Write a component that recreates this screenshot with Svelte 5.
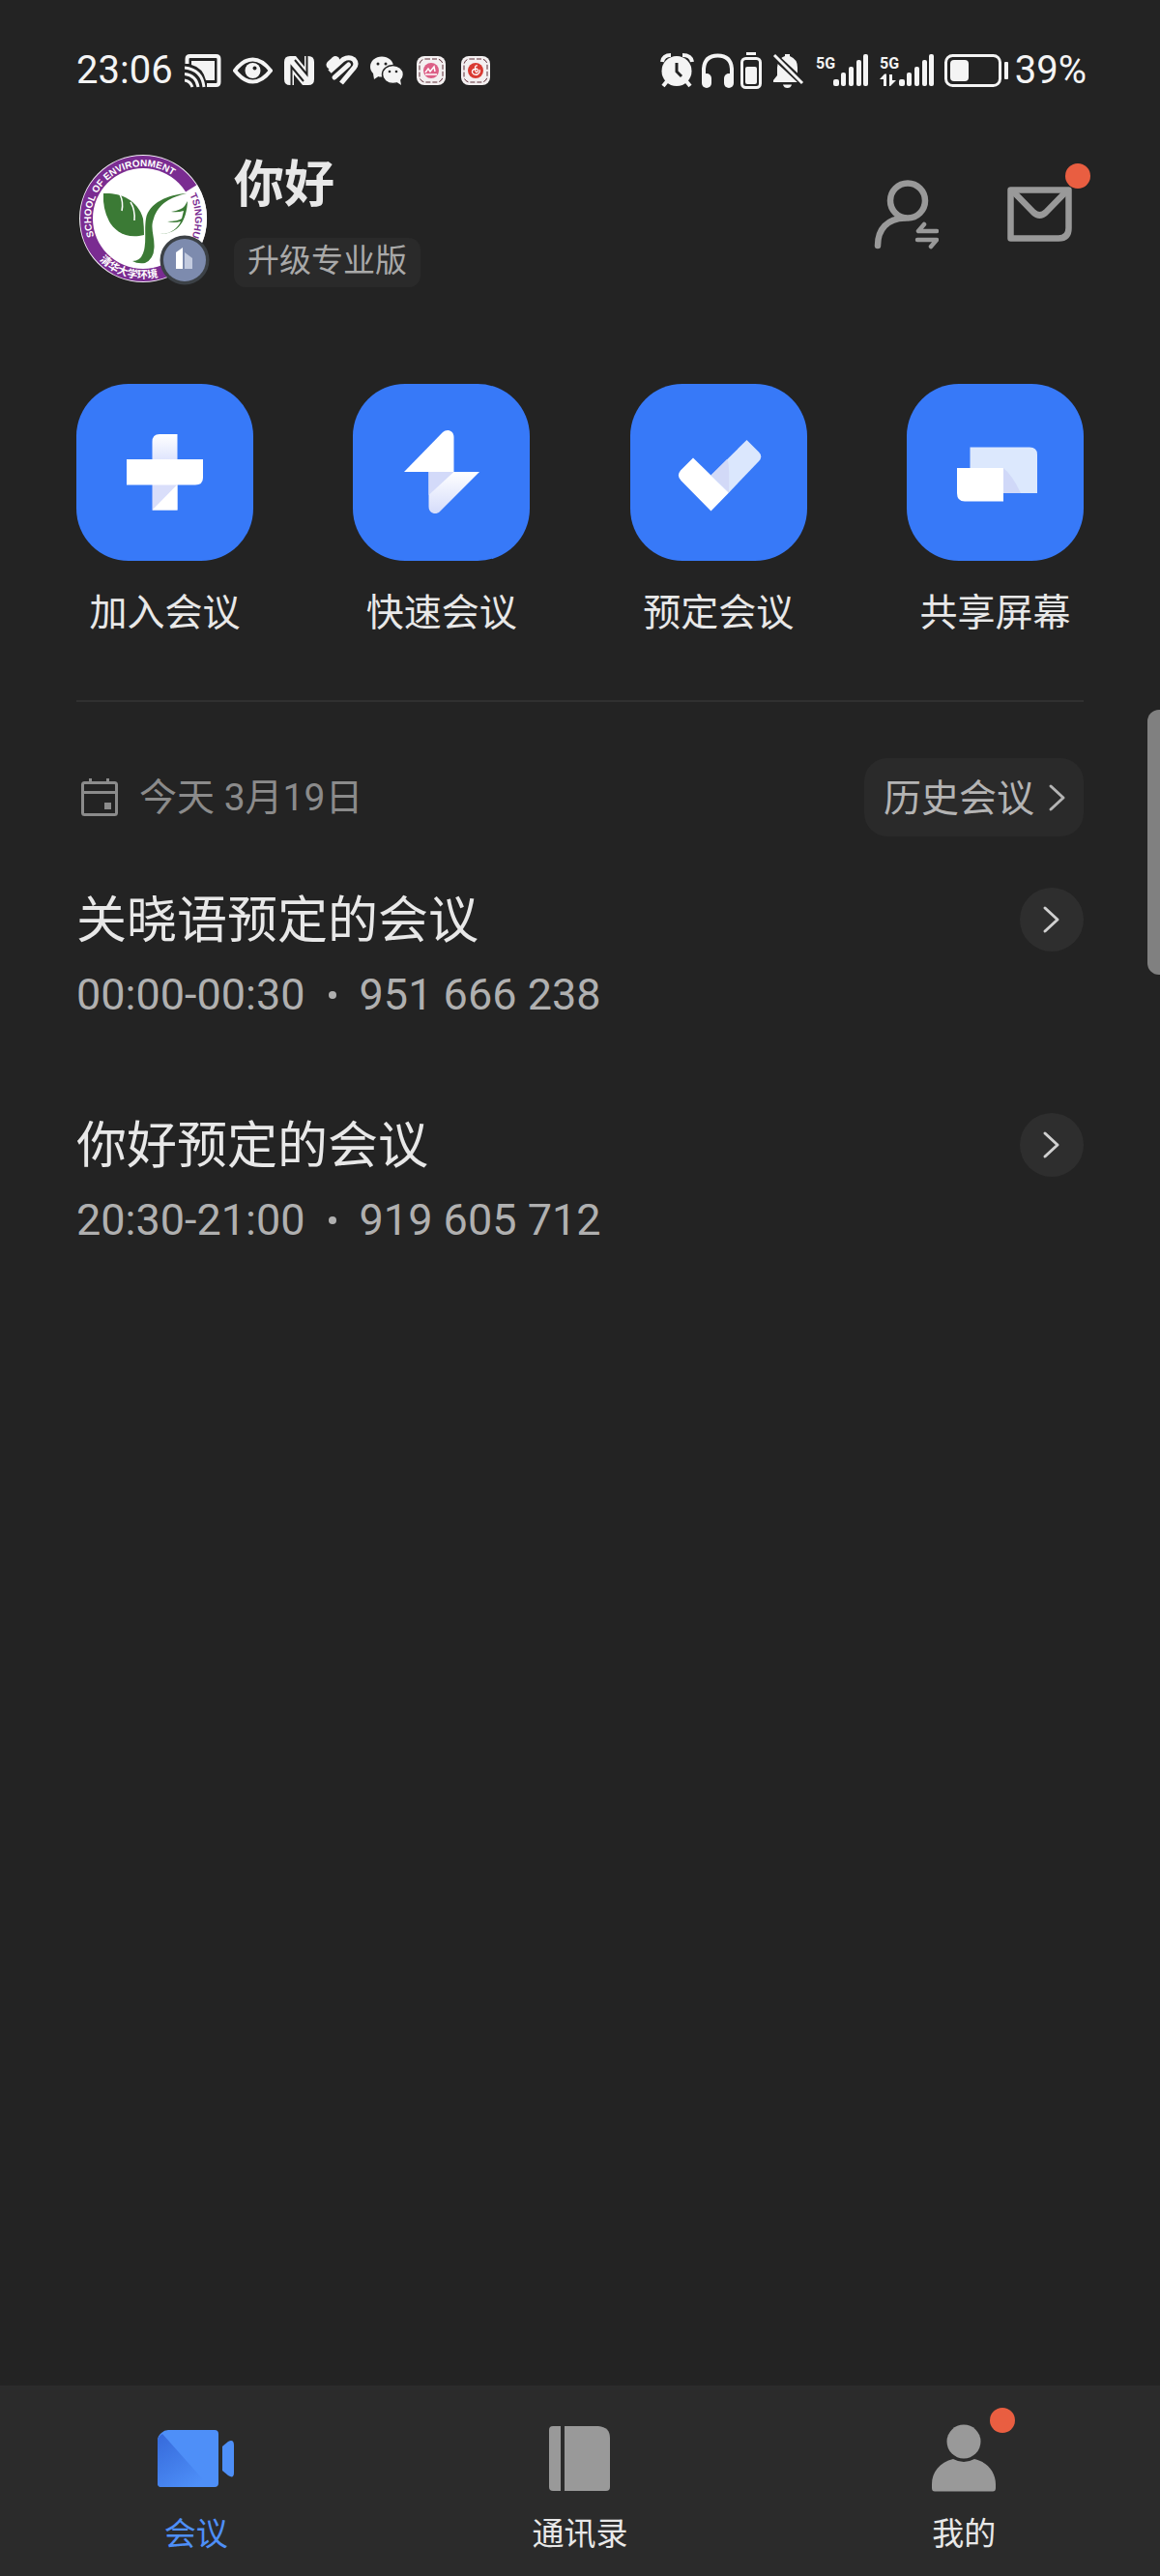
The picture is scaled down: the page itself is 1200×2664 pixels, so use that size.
<script>
  const actions = [
    { id: 'join', label: '加入会议' },
    { id: 'quick', label: '快速会议' },
    { id: 'book', label: '预定会议' },
    { id: 'share', label: '共享屏幕' }
  ];
  const meetings = [
    { title: '关晓语预定的会议', time: '00:00-00:30', code: '951 666 238' },
    { title: '你好预定的会议', time: '20:30-21:00', code: '919 605 712' }
  ];
  const tabs = [
    { id: 'meeting', label: '会议', active: true },
    { id: 'contacts', label: '通讯录' },
    { id: 'mine', label: '我的', dot: true }
  ];
</script>

{#snippet signal(data)}
  <svg class="light" width={data ? 64 : 60} height="38" viewBox="0 0 {data ? 64 : 60} 38" aria-hidden="true">
    <text class="net" x="4" y="17">5G</text>
    <g transform="translate({data ? 2 : 0} 0)">
      <rect x="22" y="28" width="6" height="7" rx="2" />
      <rect x="30" y="21" width="5" height="14" rx="2" />
      <rect x="38" y="15" width="5" height="20" rx="2" />
      <rect x="46" y="8" width="5" height="27" rx="2" />
      <rect x="53" y="2" width="5" height="33" rx="2" />
    </g>
    {#if data}
      <path d="M4 28 L9 22.500 H11 V35 H8 V28 Z M14 23 H17 V29 H21 L15 35 H14 Z" />
    {/if}
  </svg>
{/snippet}

{#snippet chevron()}
  <svg width="20" height="32" viewBox="0 0 20 32" fill="none" stroke="currentColor" stroke-width="3" stroke-linecap="round" stroke-linejoin="round" aria-hidden="true">
    <path d="M3 4 L16 16 L3 28" />
  </svg>
{/snippet}

<div class="screen">
  <div class="status">
    <div class="status-left">
      <span class="clock">23:06</span>
      <svg class="light" width="38" height="36" viewBox="0 0 38 36" aria-hidden="true">
        <path d="M2.500 11 V6 Q2.500 3 5.500 3 H32.500 Q35.500 3 35.500 6 V30 Q35.500 33 32.500 33 H23" fill="none" stroke="#f4f4f4" stroke-width="4" />
        <path d="M7 8 H31 V28 H22 Q19 15 7 12 Z" />
        <path d="M0 15 Q18 17 20 35 M0 21.500 Q12 23 14 35 M0 28 Q6 29 8 35" fill="none" stroke="#f4f4f4" stroke-width="3" />
      </svg>
      <svg class="light" width="41" height="28" viewBox="0 0 41 28" aria-hidden="true">
        <path d="M2 14 Q11 2.500 20.500 2.500 T39 14 Q30 25.500 20.500 25.500 T2 14 Z" fill="none" stroke="#f4f4f4" stroke-width="4" stroke-linejoin="round" />
        <circle cx="20.500" cy="14" r="8" />
        <circle cx="22.500" cy="11.500" r="2" fill="#232323" />
      </svg>
      <svg class="light" width="31" height="32" viewBox="0 0 31 32" aria-hidden="true">
        <path d="M6 1 H12 L21 12 V1 H25 Q31 1 31 7 V25 Q31 31 25 31 H19 L10 20 V31 H6 Q0 31 0 25 V7 Q0 1 6 1 Z" />
        <path d="M7.500 31 V12 L20 27 M23.500 1 V20 L11 5" fill="none" stroke="#232323" stroke-width="2" />
      </svg>
      <svg width="34" height="32" viewBox="0 0 34 32" fill="none" stroke="#f4f4f4" aria-hidden="true">
        <path d="M5 10 L10 5.500" stroke-width="9" stroke-linecap="round" />
        <path d="M4 17 L18 4.500 Q24 1 29 4.500 Q33 9 29 13.500 L16 29" stroke-width="5" />
        <path d="M9 23 L23.500 10" stroke-width="5" stroke-linecap="round" />
      </svg>
      <svg class="light" width="34" height="30" viewBox="0 0 34 30" aria-hidden="true">
        <ellipse cx="12" cy="11" rx="12" ry="10.500" />
        <path d="M3 18 L4 24 L10 20 Z" />
        <ellipse cx="23.500" cy="19" rx="11" ry="9.500" stroke="#232323" stroke-width="1.500" />
        <path d="M26 26 L32 30 L31 24 Z" />
        <g fill="#232323">
          <circle cx="8" cy="8" r="1.500" /><circle cx="16" cy="8" r="1.500" />
          <circle cx="20" cy="16" r="1.300" /><circle cx="27" cy="16" r="1.300" />
        </g>
      </svg>
      <svg width="34" height="30" viewBox="0 0 34 30" aria-hidden="true">
        <rect x="2" y="0" width="30" height="30" rx="8" fill="#f4f0f1" />
        <rect x="5" y="3" width="24" height="24" rx="6" fill="none" stroke="#5c2a35" stroke-dasharray="5 2" />
        <circle cx="17" cy="15" r="8" fill="#dc5f86" />
        <path d="M11 17 L14 13 L16 16 L20 11 L21 16 M11 19 H23" fill="none" stroke="#fff" stroke-width="1.500" />
      </svg>
      <svg width="34" height="30" viewBox="0 0 34 30" aria-hidden="true">
        <rect x="2" y="0" width="30" height="30" rx="8" fill="#f4f0f1" />
        <rect x="5" y="3" width="24" height="24" rx="6" fill="none" stroke="#5c2a35" stroke-dasharray="5 2" />
        <circle cx="17" cy="15" r="8" fill="#d93a32" />
        <path d="M19 10 Q16 9 16.500 14 Q17 18 19 16 Q20 13 17 13 Q13 14 13.500 17 Q15 20 19 19 Q22 17 21 14" fill="none" stroke="#fff" stroke-width="1.300" />
      </svg>
    </div>
    <div class="status-right">
      <svg class="light" width="36" height="36" viewBox="0 0 36 36" aria-hidden="true">
        <circle cx="17" cy="18.500" r="15.500" />
        <path d="M2 9 Q3 2 11 2 M23 2 Q32 2 33 9" fill="none" stroke="#f4f4f4" stroke-width="4" />
        <path d="M7 29 L3 34 M27 29 L31 34" stroke="#f4f4f4" stroke-width="4" />
        <path d="M17 10 V19 L22 24" fill="none" stroke="#232323" stroke-width="3" />
      </svg>
      <svg class="light" width="35" height="38" viewBox="0 0 35 38" aria-hidden="true">
        <path d="M3 27 V17 Q4 3.500 17.500 3.500 T32 17 V27" fill="none" stroke="#f4f4f4" stroke-width="4" />
        <rect x="1" y="22" width="10" height="15" rx="5" />
        <rect x="24" y="22" width="10" height="15" rx="5" />
      </svg>
      <svg class="light" width="24" height="40" viewBox="0 0 24 40" aria-hidden="true">
        <rect x="6" y="1" width="10" height="3" />
        <rect x="1.500" y="7.500" width="19" height="30" rx="4" fill="none" stroke="#f4f4f4" stroke-width="3" />
        <rect x="5" y="16" width="12" height="18" rx="2" />
      </svg>
      <svg class="light" width="38" height="38" viewBox="0 0 38 38" aria-hidden="true">
        <path d="M16 4 V2 H21 V4 Q29 7 29 16 V24 L33 31 H4 V29 L8 24 V16 Q9 6 16 4 Z" />
        <path d="M14 33.500 H23 Q22 37 18.500 37 T14 33.500 Z" />
        <path d="M3 2 L36 33" stroke="#232323" stroke-width="7" />
        <path d="M5 3 L34 32" stroke="#f4f4f4" stroke-width="3" />
      </svg>
      {@render signal(false)}
      {@render signal(true)}
      <svg class="light" width="68" height="36" viewBox="0 0 68 36" aria-hidden="true">
        <rect x="2.500" y="2.500" width="56" height="31" rx="7" fill="none" stroke="#f4f4f4" stroke-width="3" />
        <rect x="7" y="7" width="19" height="22" rx="4" />
        <rect x="63" y="9" width="4" height="18" rx="1" />
      </svg>
      <span class="clock">39%</span>
    </div>
  </div>

  <main>
    <header>
      <svg class="avatar" width="136" height="136" viewBox="0 0 136 136" role="img" aria-label="头像">
        <defs>
          <path id="ring-top" d="M15.300 84.500 A54 54 0 0 1 107.400 31.300" />
          <path id="ring-right" d="M114.100 41.500 A54 54 0 0 1 107.400 100.700" />
          <path id="ring-bottom" d="M21 109 A62.500 62.500 0 0 0 112 108" />
        </defs>
        <circle cx="66" cy="66" r="66" fill="#f3eef5" />
        <circle cx="66" cy="66" r="58" fill="none" stroke="#7a2c91" stroke-width="14" />
        <path d="M66 66 L122 31 A66 66 0 0 1 122 101 Z" fill="#fff" />
        <circle cx="66" cy="66" r="52" fill="#fff" />
        <text class="ring-en" fill="#fff"><textPath href="#ring-top">SCHOOL OF ENVIRONMENT</textPath></text>
        <text class="ring-en" fill="#7a2c91"><textPath href="#ring-right">TSINGHU</textPath></text>
        <text class="ring-cn" fill="#fff"><textPath href="#ring-bottom">清华大学环境</textPath></text>
        <g fill="#3b7a35">
          <path d="M25 40 C40 39 60 45 66 66 Q67 75 67 83 C48 88 36 78 31 69 Q24 56 25 40 Z" />
          <path d="M111 40 C92 41 72 50 69 66 C67 78 70 92 66 102 Q63 110 55 110 Q60 113 68 112 Q77 108 77.500 96 C78 84 73 76 77 66 C82 50 95 44 111 40 Z" />
          <path d="M112 48 C111 68 103 83 81 82 C94 83 102 76 105 69 Q98 71 91 69 Q102 69 106 66 L108 58 Q102 60 95 59 Q106 57 109 53 Z" />
        </g>
        <path d="M42 41 Q46 49 44 58 M53 49 Q58 57 57 68" fill="none" stroke="#fff" stroke-width="1.500" />
        <circle cx="109" cy="109" r="25.500" fill="#3c4146" />
        <circle cx="109" cy="109" r="22" fill="#7d8bae" />
        <path d="M100 101 L107 96 V118 H100 Z" fill="#fff" />
        <path d="M109 101 L117 107 V118 H109 Z" fill="#c3cbdf" />
      </svg>
      <div class="who">
        <h1>你好</h1>
        <button class="upgrade">升级专业版</button>
      </div>
      <div class="tools">
        <button class="tool" aria-label="切换账号">
          <svg width="67" height="72" viewBox="0 0 67 72" fill="none" stroke="#999" stroke-linecap="round" stroke-linejoin="round" aria-hidden="true">
            <circle cx="35" cy="21.500" r="18" stroke-width="6.500" />
            <path d="M4 68 C4 51 14 40 32 39.500" stroke-width="6.500" />
            <path d="M52 46 L46 53 H65 M45 62 H65 L59 69" stroke-width="4.500" />
          </svg>
        </button>
        <button class="tool" aria-label="消息">
          <svg width="67" height="58" viewBox="0 0 67 58" fill="none" stroke="#999" stroke-width="6.500" stroke-linejoin="round" aria-hidden="true">
            <path d="M3.500 3.500 H63.500 V43 Q63.500 53.500 53 53.500 H3.500 Z" />
            <path d="M6 5 L27 26.500 Q33.500 32.500 40 26.500 L61 5" />
          </svg>
          <span class="dot"></span>
        </button>
      </div>
    </header>

    <ul class="actions">
      {#each actions as a (a.id)}
        <li>
          <button class="action">
            <svg class="tile" viewBox="0 0 183 183" aria-hidden="true">
              {#if a.id === 'join'}
                <defs><linearGradient id="g1" x2="0" y2="1"><stop offset="0" stop-color="#fff" /><stop offset="1" stop-color="#dfe5fd" /></linearGradient></defs>
                <path d="M78.500 78.500 V60 Q78.500 52 86 52 H104.500 V78.500 Z" fill="url(#g1)" />
                <rect x="78.500" y="104" width="26" height="26.500" fill="#d9defa" />
                <path d="M78.500 130.500 L104.500 104 V130.500 Z" fill="#fff" />
                <path d="M52 78 H131 V97 Q131 104.500 123 104.500 H52 Z" fill="#fff" />
              {:else if a.id === 'quick'}
                <defs><linearGradient id="g2" x2="0" y2="1"><stop offset="0" stop-color="#fff" /><stop offset="1" stop-color="#d5dcfa" /></linearGradient></defs>
                <path d="M78.500 91 H131 L90 132 C86 136 78.500 134 78.500 127 Z" fill="url(#g2)" />
                <path d="M78.500 91 H104.500 L78.500 115 Z" fill="#d3daf9" />
                <path d="M53 91 L93 50 C97 46 104.500 48 104.500 55 V91 Z" fill="#fff" />
              {:else if a.id === 'book'}
                <path d="M83.500 94.500 L120.500 58 L133 70.500 Q137.500 75 133 80 L102 112.500 Z" fill="#dbe7fd" />
                <path d="M83.500 94.500 L100 78 Q103 80 102 112.500 Z" fill="#d2d9f7" />
                <path d="M65 76.500 L102 112.500 L83.500 131.500 L52.500 100 Q47.500 95 52 89.500 Z" fill="#fff" />
              {:else}
                <path d="M65.500 65.500 H127 Q135 65.500 135 73 V113 H65.500 Z" fill="#dce8fd" />
                <path d="M100 87 Q109 94 118 113 H100 Z" fill="#d0d8f8" />
                <path d="M52 87 H100 V121.500 H60 Q52 121.500 52 113 Z" fill="#fff" />
              {/if}
            </svg>
            <span>{a.label}</span>
          </button>
        </li>
      {/each}
    </ul>

    <section class="agenda">
      <div class="day">
        <svg width="38" height="40" viewBox="0 0 38 40" fill="none" stroke="#8b8b8b" stroke-width="3" aria-hidden="true">
          <rect x="1.500" y="4.500" width="35" height="33" rx="2" />
          <path d="M1 14.500 H37 M9.500 0 V5 M27.500 0 V5" />
          <rect x="24" y="25" width="7" height="7" fill="#8b8b8b" stroke="none" />
        </svg>
        <h2>今天 3月19日</h2>
        <button class="history"><span>历史会议</span>{@render chevron()}</button>
      </div>
      <ul class="meetings">
        {#each meetings as m (m.code)}
          <li>
            <div class="row">
              <h3>{m.title}</h3>
              <button class="open" aria-label="查看{m.title}">{@render chevron()}</button>
            </div>
            <p><span>{m.time}</span><i></i><span>{m.code}</span></p>
          </li>
        {/each}
      </ul>
    </section>
  </main>

  <nav>
    {#each tabs as t (t.id)}
      <a href="#{t.id}" class:active={t.active}>
        <span class="glyph">
          {#if t.id === 'meeting'}
            <svg width="79" height="70" viewBox="0 0 79 70" aria-hidden="true">
              <defs><linearGradient id="cam" x1="0" y1="0" x2="0.700" y2="1"><stop offset="0" stop-color="#3569da" /><stop offset="1" stop-color="#4e8ff8" /></linearGradient></defs>
              <path d="M11 6 H59 Q63 6 63 10 V61 Q63 65 59 65 H4 Q0 65 0 61 V17 Q0 12 4 9 Q7 6 11 6 Z" fill="#4e8ff8" />
              <path d="M5 10 L54 65 H4 Q0 65 0 61 V17 Q0 13 5 10 Z" fill="url(#cam)" />
              <path d="M67 23 L73 18 Q79 15 79 22 V50 Q79 57 73 53 L67 48 Z" fill="#4e8ff8" />
            </svg>
          {:else if t.id === 'contacts'}
            <svg width="63" height="70" viewBox="0 0 63 70" fill="#999" aria-hidden="true">
              <path d="M12 2 V69 H4 Q0 69 0 65 V6 Q0 2 4 2 Z" />
              <path d="M16 2 H51 Q63 3 63 14 V65 Q63 69 59 69 H16 Z" />
            </svg>
          {:else}
            <svg width="66" height="70" viewBox="0 0 66 70" fill="#999" aria-hidden="true">
              <circle cx="33" cy="18" r="17.500" />
              <path d="M22 36 Q33 42 44 36 C58 39 66 50 66 62 V66 Q66 69.500 63 69.500 H3 Q0 69.500 0 66 V62 C0 50 8 39 22 36 Z" />
            </svg>
          {/if}
          {#if t.dot}<span class="dot"></span>{/if}
        </span>
        <span>{t.label}</span>
      </a>
    {/each}
  </nav>
  <div class="thumb"></div>
</div>

<style>
  :global(body) {
    margin: 0;
    background: #232323;
  }
  .screen {
    position: relative;
    display: flex;
    flex-direction: column;
    min-height: 100vh;
    background: #232323;
    color: #e8e8e8;
    font-family: Roboto, "Noto Sans CJK SC", sans-serif;
  }
  svg {
    display: block;
    flex: none;
  }
  button {
    padding: 0;
    border: 0;
    background: none;
    color: inherit;
    font: inherit;
    cursor: pointer;
  }
  ul {
    margin: 0;
    padding: 0;
    list-style: none;
  }
  h1, h2, h3, p {
    margin: 0;
    font-weight: 400;
  }
  .light {
    fill: #f4f4f4;
  }
  .status {
    display: flex;
    justify-content: space-between;
    height: 66px;
    padding: 40px 76px 0 79px;
  }
  .status-left,
  .status-right {
    display: flex;
    align-items: center;
    gap: 12px;
  }
  .status-right {
    gap: 6px;
  }
  .clock {
    font-size: 40px;
    line-height: 48px;
    color: #f4f4f4;
  }
  .net {
    font: 700 16px Roboto, sans-serif;
  }
  main {
    flex: 1;
    padding: 54px 79px 80px;
  }
  header {
    display: flex;
    align-items: flex-start;
  }
  .avatar {
    margin-left: 3px;
    overflow: visible;
  }
  .ring-en {
    font: 700 10px "Liberation Sans Narrow", "Liberation Sans", sans-serif;
  }
  .ring-cn {
    font: 700 11px "Noto Sans CJK SC", sans-serif;
  }
  .who {
    display: flex;
    flex-direction: column;
    align-items: flex-start;
    gap: 22px;
    margin-left: 24px;
  }
  h1 {
    font-size: 52px;
    line-height: 64px;
    font-weight: 700;
  }
  .upgrade {
    padding: 0 14px 3px;
    border-radius: 12px;
    background: #2a2a2a;
    color: #a9a9a9;
    font-size: 33px;
    line-height: 48px;
  }
  .tools {
    display: flex;
    align-items: center;
    gap: 71px;
    margin: 26px 12px 0 auto;
  }
  .tool,
  .glyph {
    position: relative;
  }
  .dot {
    position: absolute;
    top: -24px;
    right: -19px;
    width: 26px;
    height: 26px;
    border-radius: 50%;
    background: #e95e41;
  }
  .glyph .dot {
    top: -17px;
    right: -20px;
  }
  .actions {
    display: flex;
    justify-content: space-between;
    margin-top: 100px;
    padding-bottom: 66px;
    border-bottom: 2px solid #303030;
  }
  .action {
    display: flex;
    flex-direction: column;
    align-items: center;
    gap: 30px;
    font-size: 39px;
    line-height: 48px;
  }
  .tile {
    width: 183px;
    height: 183px;
    border-radius: 54px;
    background: #3779f8;
  }
  .day {
    display: flex;
    align-items: center;
    gap: 22px;
    margin-top: 58px;
    padding-left: 5px;
    color: #8b8b8b;
  }
  h2 {
    font-size: 39px;
    line-height: 48px;
  }
  .history {
    display: flex;
    align-items: center;
    gap: 14px;
    margin-left: auto;
    padding: 0 17px 0 20px;
    border-radius: 24px;
    background: #2a2a2a;
    color: #b4b4b4;
    font-size: 39px;
    line-height: 78px;
  }
  .history span {
    padding-top: 3px;
  }
  .meetings {
    display: flex;
    flex-direction: column;
    gap: 92px;
    margin-top: 53px;
  }
  .row {
    display: flex;
    align-items: center;
    justify-content: space-between;
  }
  h3 {
    padding-top: 4px;
    font-size: 52px;
    line-height: 60px;
  }
  .open {
    display: flex;
    align-items: center;
    justify-content: center;
    width: 66px;
    height: 66px;
    border-radius: 50%;
    background: #2e2e2e;
    color: #d0d0d0;
  }
  p {
    display: flex;
    align-items: center;
    gap: 24px;
    margin-top: 15px;
    color: #b0b0b0;
    font-size: 45px;
    line-height: 60px;
  }
  p i {
    width: 8px;
    height: 8px;
    border-radius: 50%;
    background: #b0b0b0;
  }
  nav {
    display: flex;
    padding: 40px 4px 23px;
    background: #2b2b2b;
  }
  nav a {
    flex: 1;
    display: flex;
    flex-direction: column;
    align-items: center;
    gap: 24px;
    color: #e8e8e8;
    font-size: 33px;
    line-height: 40px;
    text-decoration: none;
  }
  nav a.active {
    color: #4e8ff8;
  }
  .thumb {
    position: absolute;
    top: 734px;
    right: 0;
    width: 13px;
    height: 274px;
    border-radius: 12px 0 0 12px;
    background: #808080;
  }
</style>
